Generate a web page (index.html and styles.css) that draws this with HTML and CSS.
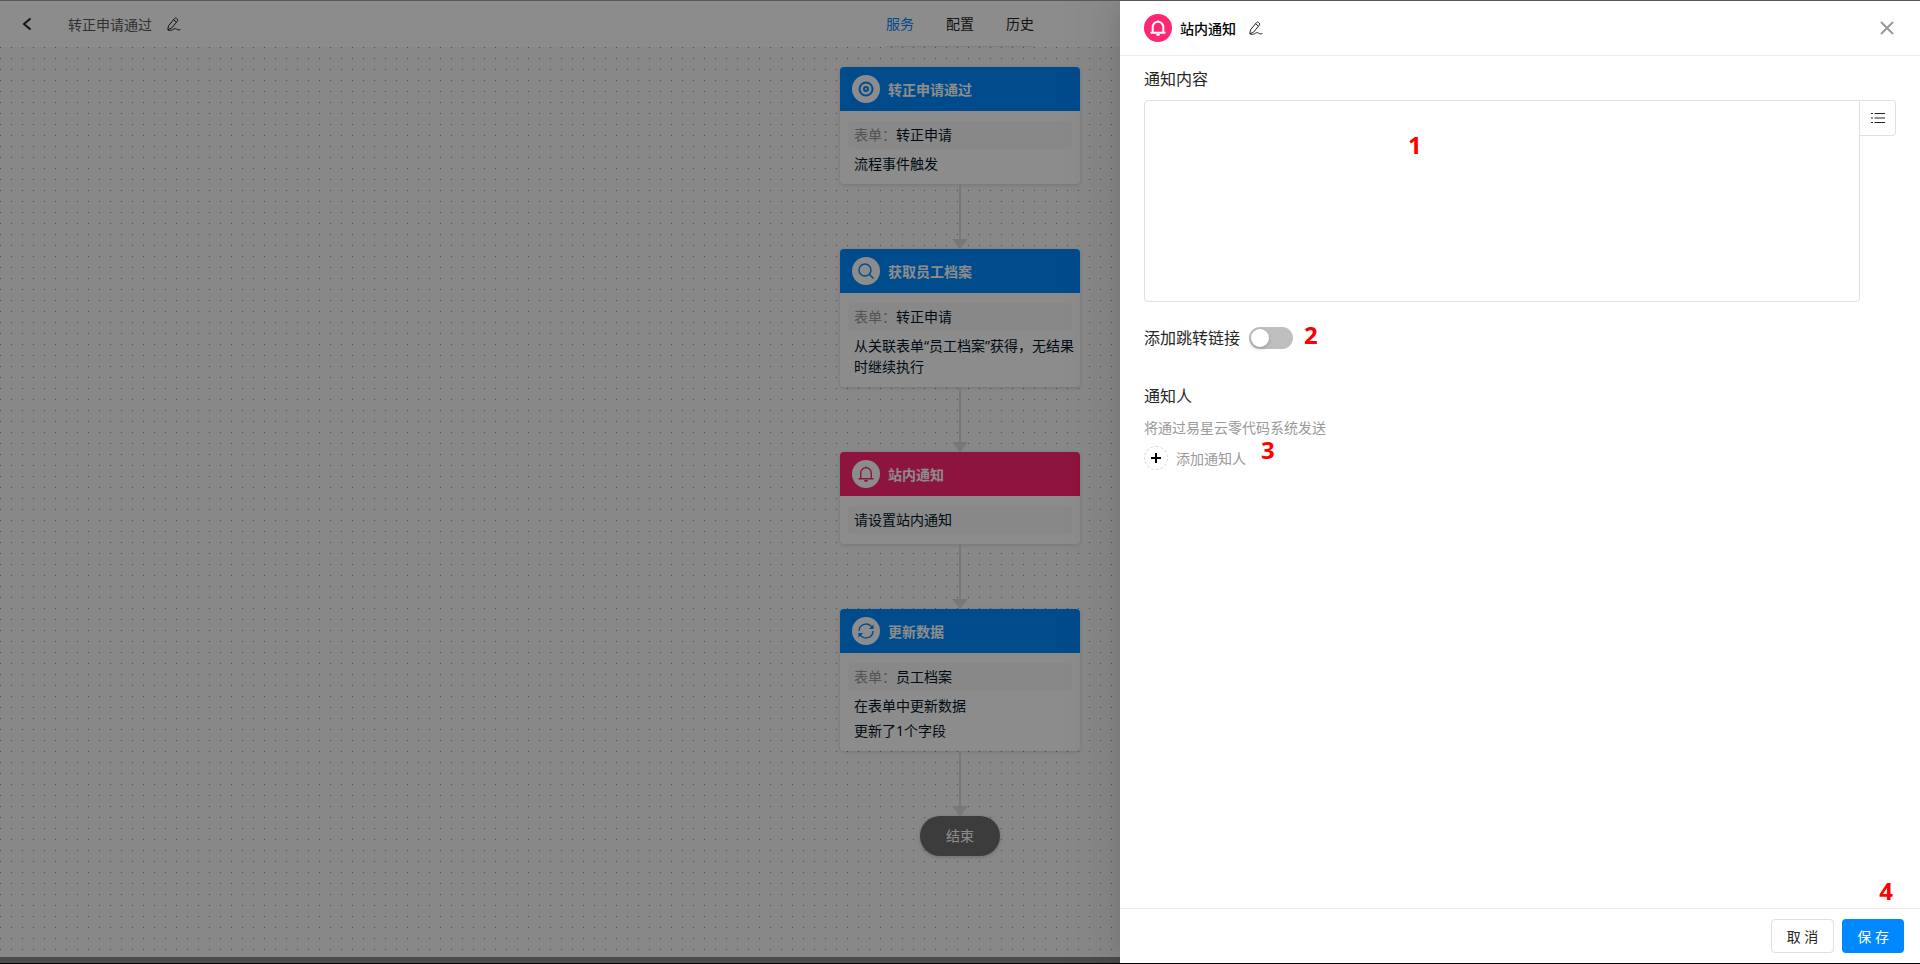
FILE: index.html
```html
<!DOCTYPE html>
<html lang="zh-CN">
<head>
    <meta charset="UTF-8">
    <meta name="viewport" content="width=device-width, initial-scale=1.0">
    <title>转正申请通过</title>
    <link rel="stylesheet" href="styles.css">
</head>
<body>
    <!-- Shared icons -->
    <svg class="icon-defs" aria-hidden="true">
        <symbol id="icon-edit" viewBox="0 0 14 14">
            <path d="M.8 12.800 1.500 8.800 7.600 1.500a1.300 1.300 0 0 1 1.800-.2l.9.8a1.300 1.300 0 0 1 .2 1.800L4.500 11.200ZM6.600 2.800l2.800 2.300M.8 12.800c1.500.8 3.200.7 4.800-.1 1.600-.9 2.800-1.500 3.800-.7 1 .8 2.200 1.200 4 .5"/>
        </symbol>
        <symbol id="icon-bell" viewBox="0 0 16 16">
            <path d="M.5 12.700h15M2.700 12.700V7a5.300 5.300 0 0 1 10.600 0v5.700M8 1.900V.5"/>
            <path class="solid" d="M6 14h4a2 2 0 0 1-4 0Z"/>
        </symbol>
    </svg>

    <div class="app">
        <header class="topbar">
            <div class="topbar-left">
                <button class="icon-btn back" aria-label="返回">
                    <svg width="10" height="14" viewBox="0 0 10 14"><path d="M8.500 1.500 2 7l6.500 5.500"/></svg>
                </button>
                <span class="flow-name">转正申请通过</span>
                <button class="icon-btn" aria-label="编辑名称">
                    <svg width="14" height="14"><use href="#icon-edit"/></svg>
                </button>
            </div>
            <nav class="tabs">
                <a href="#" class="active">服务</a>
                <a href="#">配置</a>
                <a href="#">历史</a>
            </nav>
        </header>

        <main class="canvas">
            <section class="node">
                <h2 class="node-title">
                    <span class="node-icon">
                        <svg width="16" height="16" viewBox="0 0 16 16"><circle cx="8" cy="8" r="6.500"/><circle cx="8" cy="8" r="2"/></svg>
                    </span>
                    转正申请通过
                </h2>
                <div class="node-body">
                    <p class="node-form"><span>表单：</span>转正申请</p>
                    <p>流程事件触发</p>
                </div>
            </section>
            <div class="connector"></div>

            <section class="node">
                <h2 class="node-title">
                    <span class="node-icon thin">
                        <svg width="16" height="16" viewBox="0 0 16 16"><circle cx="7" cy="7" r="6"/><path d="m11.300 11.300 4.200 4.200"/></svg>
                    </span>
                    获取员工档案
                </h2>
                <div class="node-body">
                    <p class="node-form"><span>表单：</span>转正申请</p>
                    <p>从关联表单“员工档案”获得，无结果时继续执行</p>
                </div>
            </section>
            <div class="connector"></div>

            <section class="node node-notice">
                <h2 class="node-title">
                    <span class="node-icon thin">
                        <svg width="16" height="16"><use href="#icon-bell"/></svg>
                    </span>
                    站内通知
                </h2>
                <div class="node-body">
                    <p class="node-form">请设置站内通知</p>
                </div>
            </section>
            <div class="connector"></div>

            <section class="node">
                <h2 class="node-title">
                    <span class="node-icon thin">
                        <svg width="18" height="18" viewBox="0 0 18 18"><path d="M2 9a7 7 0 0 1 13-3.500M16 9a7 7 0 0 1-13 3.500"/><path class="solid" d="M16.500 2.500v4.500h-4.500ZM1.500 15.500v-4.500h4.500Z"/></svg>
                    </span>
                    更新数据
                </h2>
                <div class="node-body">
                    <p class="node-form"><span>表单：</span>员工档案</p>
                    <p>在表单中更新数据</p>
                    <p>更新了1个字段</p>
                </div>
            </section>
            <div class="connector"></div>

            <div class="node-end">结束</div>
        </main>
        <div class="scroll-track"></div>

        <!-- Drawer -->
        <div class="mask">
            <aside class="drawer">
                <header class="drawer-header">
                    <span class="drawer-icon">
                        <svg width="16" height="16"><use href="#icon-bell"/></svg>
                    </span>
                    <h1>站内通知</h1>
                    <button class="icon-btn" aria-label="编辑名称">
                        <svg width="14" height="14"><use href="#icon-edit"/></svg>
                    </button>
                    <button class="icon-btn close" aria-label="关闭">
                        <svg width="14" height="14" viewBox="0 0 14 14"><path d="m1 1 12 12M13 1 1 13"/></svg>
                    </button>
                </header>

                <div class="drawer-body">
                    <label class="field-label" for="content">通知内容</label>
                    <div class="editor">
                        <textarea id="content"></textarea>
                        <button class="insert-btn" aria-label="插入字段">
                            <svg width="14" height="12" viewBox="0 0 14 12"><path d="M3.500 1.500H14M3.500 6H14M3.500 10.500H14M0 1.500h2M0 6h2M0 10.500h2"/></svg>
                        </button>
                        <span class="mark mark-content">1</span>
                    </div>

                    <div class="link-row">
                        <label class="field-label" for="link">添加跳转链接</label>
                        <input class="switch" type="checkbox" role="switch" id="link">
                        <span class="mark mark-link">2</span>
                    </div>

                    <h2 class="field-label">通知人</h2>
                    <p class="hint">将通过易星云零代码系统发送</p>
                    <div class="add-row">
                        <button class="add-btn">
                            <span class="add-icon">
                                <svg width="10" height="10" viewBox="0 0 10 10"><path d="M5 0v10M0 5h10"/></svg>
                            </span>
                            添加通知人
                        </button>
                        <span class="mark mark-add">3</span>
                    </div>
                </div>

                <footer class="drawer-footer">
                    <button class="btn">取 消</button>
                    <button class="btn btn-primary">保 存</button>
                    <span class="mark mark-save">4</span>
                </footer>
            </aside>
        </div>
    </div>
</body>
</html>
```

FILE: styles.css
```css
/* Global Styles */
* {
    margin: 0;
    padding: 0;
    box-sizing: border-box;
}

body {
    font-family: "Noto Sans", "Noto Sans CJK SC", sans-serif;
    font-size: 14px;
    line-height: 21px;
    color: #262626;
}

button {
    font: inherit;
    color: inherit;
    background: none;
    border: none;
    cursor: pointer;
}

a {
    color: inherit;
    text-decoration: none;
}

svg {
    display: block;
    fill: none;
    stroke: currentColor;
}

.icon-defs {
    position: absolute;
    width: 0;
    height: 0;
}

.solid {
    fill: currentColor;
    stroke: none;
}

.app {
    position: relative;
    display: flex;
    flex-direction: column;
    height: 100vh;
    overflow: hidden;
    border-top: 1px solid #595758;
    border-bottom: 1px solid #000;
}

/* Top bar */
.topbar {
    display: grid;
    grid-template-columns: 1fr auto 1fr;
    height: 46px;
    flex-shrink: 0;
    background: #fff;
}

.topbar-left {
    display: flex;
    align-items: center;
    padding-left: 22px;
}

.back {
    margin-right: 36px;
    stroke-width: 2;
}

.flow-name {
    margin-right: 15px;
    color: #595959;
}

.tabs {
    display: flex;
    align-items: center;
    gap: 32px;
    border-bottom: 1px solid #e8e8e8;
}

.tabs .active {
    color: #0089ff;
}

/* Flow canvas */
.canvas {
    flex: 1;
    min-height: 0;
    display: flex;
    flex-direction: column;
    align-items: center;
    padding-top: 20px;
    background:
        linear-gradient(90deg, #f8f8f8 10px, transparent 10px) 1px 1px / 11px 11px,
        linear-gradient(#f8f8f8 10px, transparent 10px) 1px 1px / 11px 11px,
        #888;
}

.node {
    width: 240px;
    border-radius: 4px;
    background: #fff;
    box-shadow: 0 1px 4px rgba(0, 0, 0, 0.15);
}

.node-title {
    display: flex;
    align-items: center;
    gap: 8px;
    height: 44px;
    padding: 0 12px;
    border-radius: 4px 4px 0 0;
    background: #0089ff;
    color: #fff;
    font-size: 14px;
    font-weight: 700;
}

.node-icon,
.drawer-icon {
    display: flex;
    align-items: center;
    justify-content: center;
    width: 28px;
    height: 28px;
    border-radius: 50%;
}

.node-icon {
    background: #fff;
    color: #0089ff;
    stroke-width: 2;
}

.node-icon.thin {
    stroke-width: 1.4;
}

.node-notice .node-title {
    background: #ff2673;
}

.node-notice .node-icon {
    color: #ff2673;
}

.node-body {
    padding: 10px 0 10px 8px;
    color: #001529;
}

.node-body p {
    margin-top: 4px;
    padding-left: 6px;
}

.node-body .node-form {
    margin: 0 8px 0 0;
    line-height: 28px;
    border-radius: 4px;
    background: #f7f7f7;
}

.node-form span {
    color: #999;
}

.connector {
    display: flex;
    flex-direction: column;
    align-items: center;
    height: 65px;
    flex-shrink: 0;
}

.connector::before {
    content: "";
    flex: 1;
    width: 2px;
    background: #dadada;
}

.connector::after {
    content: "";
    border: 8px solid transparent;
    border-top: 10px solid #dadada;
    border-bottom: 0;
}

.node-end {
    width: 80px;
    border-radius: 20px;
    background: #6e6e6e;
    box-shadow: 0 1px 4px rgba(0, 0, 0, 0.2);
    color: #fff;
    line-height: 40px;
    text-align: center;
}

.scroll-track {
    height: 6px;
    flex-shrink: 0;
    background: #8a8a8a;
}

/* Drawer */
.mask {
    position: absolute;
    inset: 0;
    display: flex;
    justify-content: flex-end;
    background: rgba(0, 0, 0, 0.45);
}

.drawer {
    display: flex;
    flex-direction: column;
    width: 800px;
    max-width: 100%;
    background: #fff;
    box-shadow: -6px 0 16px -8px rgba(0, 0, 0, 0.08), -9px 0 28px 0 rgba(0, 0, 0, 0.05), -12px 0 48px 16px rgba(0, 0, 0, 0.03);
}

.drawer-header {
    display: flex;
    align-items: center;
    height: 55px;
    padding: 0 24px;
    border-bottom: 1px solid #ebebeb;
}

.drawer-icon {
    margin-right: 8px;
    background: #ff2673;
    color: #fff;
    stroke-width: 2;
}

.drawer-header h1 {
    margin-right: 13px;
    color: #000;
    font-size: 14px;
    font-weight: 500;
}

.close {
    margin-left: auto;
    padding: 2px;
    color: #999;
    stroke-width: 2;
}

.drawer-body {
    flex: 1;
    padding: 11px 24px;
    overflow: auto;
}

.field-label {
    font-size: 16px;
    font-weight: 400;
    line-height: 24px;
}

.editor {
    position: relative;
    display: flex;
    align-items: flex-start;
    margin-top: 9px;
}

.editor textarea {
    flex: 1;
    height: 202px;
    padding: 8px;
    border: 1px solid #e0e0e0;
    border-radius: 4px 0 4px 4px;
    outline: none;
    resize: none;
    font: inherit;
}

.insert-btn {
    display: flex;
    align-items: center;
    justify-content: center;
    width: 36px;
    height: 36px;
    border: 1px solid #e0e0e0;
    border-left: none;
    border-radius: 0 4px 4px 0;
}

.link-row {
    position: relative;
    display: flex;
    align-items: center;
    gap: 9px;
    margin: 24px 0 34px;
}

.switch {
    appearance: none;
    width: 44px;
    height: 22px;
    padding: 2px;
    border-radius: 11px;
    background: #bfbfbf;
    cursor: pointer;
}

.switch::before {
    content: "";
    display: block;
    width: 18px;
    height: 18px;
    border-radius: 50%;
    background: #fff;
    box-shadow: 0 2px 4px rgba(0, 35, 11, 0.2);
}

.switch:checked {
    background: #0089ff;
}

.switch:checked::before {
    margin-left: 22px;
}

.hint {
    margin-top: 9px;
    color: #999;
}

.add-row {
    position: relative;
    display: flex;
    margin-top: 8px;
}

.add-btn {
    display: flex;
    align-items: center;
    gap: 8px;
    color: #999;
}

.add-icon {
    display: flex;
    align-items: center;
    justify-content: center;
    width: 24px;
    height: 24px;
    border: 1px dashed #d9d9d9;
    border-radius: 50%;
    color: #000;
    stroke-width: 2;
}

.drawer-footer {
    position: relative;
    display: flex;
    justify-content: flex-end;
    gap: 8px;
    padding: 10px 16px;
    border-top: 1px solid #ebebeb;
}

.btn {
    height: 34px;
    padding: 0 15px;
    border: 1px solid #e0e0e0;
    border-radius: 4px;
}

.btn-primary {
    border: none;
    background: #0089ff;
    color: #fff;
}

/* Step numbers */
.mark {
    position: absolute;
    color: #f00;
    font-size: 24px;
    font-weight: 700;
    line-height: 24px;
}

.mark-content {
    top: 33px;
    left: 264px;
}

.mark-link {
    top: -3px;
    left: 160px;
}

.mark-add {
    top: -8px;
    left: 117px;
}

.mark-save {
    top: -30px;
    right: 27px;
}
```
